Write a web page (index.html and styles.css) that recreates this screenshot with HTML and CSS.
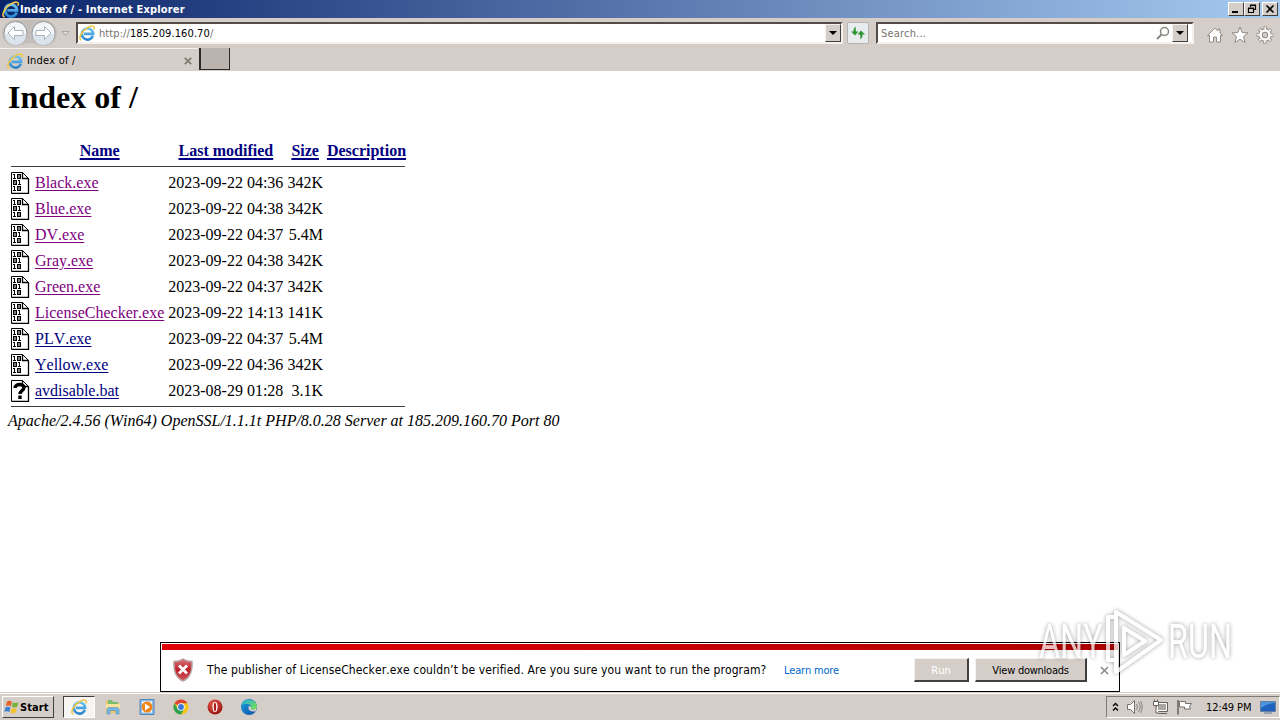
FILE: index.html
```html
<!DOCTYPE html>
<html lang="en">
<head>
    <meta charset="UTF-8">
    <meta name="viewport" content="width=device-width, initial-scale=1.0">
    <title>Index of / - Internet Explorer</title>
    <link rel="stylesheet" href="styles.css">
</head>
<body>
    <!-- Shared icons -->
    <svg class="defs" width="0" height="0">
        <defs>
            <linearGradient id="redShield" x1="0" y1="0" x2="0" y2="1">
                <stop offset="0" stop-color="#d9777b"/>
                <stop offset="0.5" stop-color="#bd1f2a"/>
                <stop offset="1" stop-color="#d0565c"/>
            </linearGradient>
            <linearGradient id="edgeBlue" x1="0" y1="0" x2="1" y2="1">
                <stop offset="0" stop-color="#1e9fe0"/>
                <stop offset="1" stop-color="#0b4ea3"/>
            </linearGradient>
            <linearGradient id="edgeGreen" x1="0" y1="0" x2="1" y2="0.6">
                <stop offset="0" stop-color="#22a6e6"/>
                <stop offset="1" stop-color="#6fe05a"/>
            </linearGradient>
            <radialGradient id="operaRed" cx="0.4" cy="0.3" r="0.8">
                <stop offset="0" stop-color="#e8604f"/>
                <stop offset="1" stop-color="#8f0808"/>
            </radialGradient>
            <linearGradient id="ieBlue" x1="0" y1="0" x2="0" y2="1">
                <stop offset="0" stop-color="#6cc3f0"/>
                <stop offset="1" stop-color="#2a86cf"/>
            </linearGradient>
        </defs>
        <symbol id="ie" viewBox="0 0 16 16">
            <path d="M13.800 10.800A5.600 5.600 0 1 1 14.100 8.900H5" fill="none" stroke="url(#ieBlue)" stroke-width="2.600"/>
            <path d="M2.500 15C-1.500 14.500 2.500 6 8 3 13 0 16.500.5 15 4.500" fill="none" stroke="#efc545" stroke-width="1.500"/>
        </symbol>
        <symbol id="binary" viewBox="0 0 20 22">
            <path d="M.5.5h11l6 6v15h-17z" fill="#fff" stroke="#000"/>
            <path d="M11.500.5v6h6M17.500 7v14.500H1" fill="none" stroke="#000" stroke-width="1.300"/>
            <!-- 10 / 01 / 10 -->
            <path d="M2 2h2v4h1v1H2V6h1V3H2zM2 14h2v4h1v1H2v-1h1v-3H2zM7 8h2v4h1v1H7v-1h1V9H7z"/>
            <path d="M6 2h4v5H6zM7.500 3v3h1V3zM2 8h4v5H2zM3.500 9v3h1V9zM6 14h4v5H6zM7.500 15v3h1v-3z" fill-rule="evenodd"/>
        </symbol>
        <symbol id="unknown" viewBox="0 0 20 22">
            <path d="M.5.5h11l6 6v15h-17z" fill="#fff" stroke="#000"/>
            <path d="M11.500.5v6h6M17.500 7v14.500H1" fill="none" stroke="#000" stroke-width="1.300"/>
            <path d="M4 8C4 3.500 13 3.500 13 7.500c0 3-4 3-4 6.500M9 15.500v3.500" fill="none" stroke="#000" stroke-width="3.400"/>
        </symbol>
    </svg>

    <div class="titlebar">
        <svg class="title-icon" width="17" height="17"><use href="#ie"/></svg>
        <span class="title-text">Index of / - Internet Explorer</span>
        <div class="window-buttons">
            <span class="win-btn"><svg width="14" height="12"><path d="M3 9h6" stroke="#000" stroke-width="2"/></svg></span>
            <span class="win-btn"><svg width="14" height="12"><path d="M5.500 4V2.500h5v4H9M5 2h6M3.500 5.500h5v4h-5zM3 5h6" fill="none" stroke="#000" stroke-width="1.200"/></svg></span>
            <span class="win-btn close"><svg width="14" height="12"><path d="M3.500 2.500l7 7M10.500 2.500l-7 7" stroke="#000" stroke-width="1.600"/></svg></span>
        </div>
    </div>

    <div class="navbar">
        <svg class="back-forward" width="72" height="30">
            <path d="M15 2h29a13 13 0 0 1 0 26c-7 0-8-3-14-3s-8 3-15 3A13 13 0 0 1 15 2z" fill="#c3beba"/>
            <circle cx="15.500" cy="15" r="11.500" fill="#f3f5f7" stroke="#929497"/>
            <circle cx="43.500" cy="15" r="11.500" fill="#f3f5f7" stroke="#929497"/>
            <path d="M4.500 16a11 11 0 0 0 22 0zM32.500 16a11 11 0 0 0 22 0z" fill="#dbe4ec"/>
            <path d="M8 15l6.500-6.500v4H23v5h-8.500v4zM51 15l-6.500-6.500v4H36v5h8.500v4z" fill="#fff" stroke="#a9b3bd"/>
            <path d="M62 13.500h7l-3.500 4z" fill="#dfdbd5" stroke="#aaa59f"/>
        </svg>
        <div class="field address">
            <svg width="16" height="16"><use href="#ie"/></svg>
            <span class="url">http://<b>185.209.160.70</b>/</span>
            <span class="drop"></span>
        </div>
        <div class="refresh">
            <svg width="20" height="20"><path d="M8 3.500C5.500 5 5.500 6.500 5.500 8.500H3l4 4 3.500-4H8C7.500 6.500 7.500 5 8 3.500zM12 16.500c2.500-1.500 2.500-3 2.500-5H17l-4-4-3.500 4H12c.5 2 .5 3.500 0 5z" fill="#2f9634"/></svg>
        </div>
        <div class="field search">
            <span class="placeholder">Search...</span>
            <svg width="14" height="14"><circle cx="8.500" cy="5.500" r="4" fill="#fff" stroke="#88837e" stroke-width="1.500"/><path d="M5.500 8.500L1 13" stroke="#88837e" stroke-width="2"/></svg>
            <span class="drop"></span>
        </div>
        <div class="tools">
            <svg width="18" height="18"><path d="M9 2L1.500 9.500H3.500v6.500h4v-5h3v5h4V9.500h2L14 7V3h-2v2z" fill="#fff" stroke="#918b86"/></svg>
            <svg width="18" height="18"><path d="M9 1l2.200 5.500 5.800.3-4.500 3.800 1.500 5.900L9 13.200l-5 3.300 1.500-5.900L1 6.800l5.800-.3z" fill="#fff" stroke="#918b86"/></svg>
            <svg width="18" height="18">
                <circle cx="9" cy="9" r="6.800" fill="none" stroke="#918b86" stroke-width="3.400" stroke-dasharray="3.200 2.140" stroke-dashoffset="1.600"/>
                <circle cx="9" cy="9" r="4.500" fill="none" stroke="#918b86" stroke-width="4.400"/>
                <circle cx="9" cy="9" r="6.600" fill="none" stroke="#fff" stroke-width="2.400" stroke-dasharray="1.700 3.484" stroke-dashoffset=".85"/>
                <circle cx="9" cy="9" r="4.500" fill="none" stroke="#fff" stroke-width="2.600"/>
            </svg>
        </div>
    </div>

    <div class="tabbar">
        <div class="tab">
            <svg width="16" height="16"><use href="#ie"/></svg>
            <span class="tab-title">Index of /</span>
            <svg width="8" height="8"><path d="M.8.8l6.400 6.400M7.200.8L.8 7.200" stroke="#817a75" stroke-width="1.700"/></svg>
        </div>
        <div class="new-tab"></div>
    </div>

    <div class="page">
        <h1>Index of /</h1>
        <table class="listing">
            <tr><th><div class="blank"></div></th><th class="name"><a href="#">Name</a></th><th><a href="#">Last modified</a></th><th><a href="#">Size</a></th><th><a href="#">Description</a></th></tr>
            <tr><td colspan="5"><hr></td></tr>
            <tr><td><svg width="20" height="22"><use href="#binary"/></svg></td><td><a class="visited" href="#">Black.exe</a></td><td>2023-09-22 04:36</td><td class="size">342K</td><td></td></tr>
            <tr><td><svg width="20" height="22"><use href="#binary"/></svg></td><td><a class="visited" href="#">Blue.exe</a></td><td>2023-09-22 04:38</td><td class="size">342K</td><td></td></tr>
            <tr><td><svg width="20" height="22"><use href="#binary"/></svg></td><td><a class="visited" href="#">DV.exe</a></td><td>2023-09-22 04:37</td><td class="size">5.4M</td><td></td></tr>
            <tr><td><svg width="20" height="22"><use href="#binary"/></svg></td><td><a class="visited" href="#">Gray.exe</a></td><td>2023-09-22 04:38</td><td class="size">342K</td><td></td></tr>
            <tr><td><svg width="20" height="22"><use href="#binary"/></svg></td><td><a class="visited" href="#">Green.exe</a></td><td>2023-09-22 04:37</td><td class="size">342K</td><td></td></tr>
            <tr><td><svg width="20" height="22"><use href="#binary"/></svg></td><td><a class="visited" href="#">LicenseChecker.exe</a></td><td>2023-09-22 14:13</td><td class="size">141K</td><td></td></tr>
            <tr><td><svg width="20" height="22"><use href="#binary"/></svg></td><td><a href="#">PLV.exe</a></td><td>2023-09-22 04:37</td><td class="size">5.4M</td><td></td></tr>
            <tr><td><svg width="20" height="22"><use href="#binary"/></svg></td><td><a href="#">Yellow.exe</a></td><td>2023-09-22 04:36</td><td class="size">342K</td><td></td></tr>
            <tr><td><svg width="20" height="22"><use href="#unknown"/></svg></td><td><a href="#">avdisable.bat</a></td><td>2023-08-29 01:28</td><td class="size">3.1K</td><td></td></tr>
            <tr><td colspan="5"><hr></td></tr>
        </table>
        <address>Apache/2.4.56 (Win64) OpenSSL/1.1.1t PHP/8.0.28 Server at 185.209.160.70 Port 80</address>
    </div>

    <!-- Download warning -->
    <div class="notice">
        <div class="notice-stripe"></div>
        <div class="notice-body">
            <svg class="shield" width="22" height="24">
                <path d="M11 1c3 2 6 2.500 9 2.500C20.500 13 18 20 11 23 4 20 1.500 13 2 3.500 5 3.500 8 3 11 1z" fill="url(#redShield)" stroke="#b9a3a3" stroke-width="1.500"/>
                <path d="M7 7.500l8 8M15 7.500l-8 8" stroke="#fff" stroke-width="2.800"/>
            </svg>
            <span class="notice-text">The publisher of LicenseChecker.exe couldn’t be verified. Are you sure you want to run the program?</span>
            <a class="learn" href="#">Learn more</a>
            <span class="button run">Run</span>
            <span class="button view">View downloads</span>
            <svg class="dismiss" width="9" height="9"><path d="M1 1l7 7M8 1L1 8" stroke="#918b88" stroke-width="1.700"/></svg>
        </div>
    </div>

    <svg class="watermark" width="210" height="76" viewBox="0 0 210 76">
        <text transform="translate(9 54) scale(0.66 1)">ANY</text>
        <text transform="translate(138 54) scale(0.66 1)">RUN</text>
        <path d="M84 13h-6v43h6M86 8l45 28-45 32zM94 24v27l21-14z"/>
    </svg>

    <div class="taskbar">
        <div class="start">
            <svg width="16" height="16">
                <path d="M3 2.500q2.500-1.500 5 .2L6.800 7.200q-2.500-1.500-5 0z" fill="#e8642c"/>
                <path d="M9 3.200q2.500 1.500 5.500 0L13.200 7.700q-2.700 1.500-5.400 0z" fill="#78b43c"/>
                <path d="M1.500 8.400q2.500-1.500 5 0L5.200 13q-2.500-1.500-5 0z" fill="#3c82d4"/>
                <path d="M7.500 9q2.700 1.500 5.400 0l-1.300 4.600q-2.700 1.500-5.400 0z" fill="#f4c030"/>
            </svg>
            <span>Start</span>
        </div>
        <div class="quick">
            <div class="task active"><svg width="16" height="16"><use href="#ie"/></svg></div>
            <div class="task">
                <svg width="18" height="18"><path d="M2 3h5l1 2h7v10H2z" fill="#e9c766"/><path d="M4 2h4l1 2h5v3H4z" fill="#79bd70"/><path d="M2 6h14v5H2z" fill="#f7e39c"/><path d="M3 16v-4.500q0-2 2-2h8q2 0 2 2V16h-3v-3.500H6V16z" fill="#77b7e2" stroke="#5594bf" stroke-width=".6"/></svg>
            </div>
            <div class="task">
                <svg width="18" height="18"><path d="M2 1.500h14v15H2z" fill="#8fbbe2" stroke="#4d86bd"/><path d="M4 3.500h10v11H4z" fill="#fff"/><circle cx="9" cy="9" r="5.500" fill="#ee861b"/><path d="M7 5.500v7l5-3.500z" fill="#fff"/></svg>
            </div>
            <div class="task">
                <svg width="18" height="18"><circle cx="9" cy="9" r="7.500" fill="#f5c518"/><path d="M9 9L2.500 5.250A7.500 7.500 0 0 1 15.500 5.250H9z" fill="#dd4437"/><path d="M2.500 5.250A7.500 7.500 0 0 0 9 16.500l3.200-5.500L9 9 5.700 10.800z" fill="#2fa150"/><circle cx="9" cy="9" r="3.800" fill="#fff"/><circle cx="9" cy="9" r="2.900" fill="#3b78dc"/></svg>
            </div>
            <div class="task">
                <svg width="18" height="18"><circle cx="9" cy="9" r="7.500" fill="url(#operaRed)"/><ellipse cx="9" cy="9" rx="2.500" ry="5" fill="#fff"/><ellipse cx="9" cy="9" rx="1.200" ry="4.200" fill="#b01b17"/></svg>
            </div>
            <div class="task">
                <svg width="18" height="18"><circle cx="9" cy="9" r="8" fill="url(#edgeBlue)"/><path d="M1.500 7C3-.5 16 .3 17 8.500c0 4-6 4-6 2 1-2-1-4.500-4-4.500-2 0-4.500.5-5.500 1z" fill="url(#edgeGreen)"/><path d="M9 8c-2 3 1 6.500 6.500 5.200l1.500-4c-1 2.500-6 3-6 1 .5-1 0-2-2-2.200z" fill="#d5cec8"/></svg>
            </div>
        </div>
        <div class="tray">
            <svg width="7" height="10"><path d="M1 4l2.500-2.500L6 4M1 8.500L3.500 6 6 8.500" fill="none" stroke="#000" stroke-width="1.400"/></svg>
            <svg width="17" height="16"><path d="M1.500 5.500h3l4-4v13l-4-4h-3z" fill="#fff" stroke="#77716d"/><path d="M10.500 5q2 3 0 6M12.500 3q3.500 5 0 10M14.500 2q3.500 6 0 12" fill="none" stroke="#89837e"/></svg>
            <svg width="17" height="16"><path d="M4.500 3.500h11v9h-11z" fill="#a9a5a1" stroke="#66615d"/><path d="M5.500 4.500h9v7h-9z" fill="none" stroke="#fff"/><path d="M7 14.500h8" stroke="#66615d"/><path d="M1.500 2.500h5v4h-5zM2.500.5v2M5.500.5v2M4 7v7h3" fill="#fff" stroke="#66615d"/></svg>
            <svg width="17" height="16"><path d="M2 1v14.500" stroke="#66615d" stroke-width="1.500"/><path d="M3.500 2.500h6v2h6l-2 3 1 2.500h-6V8h-5z" fill="#fff" stroke="#77716d"/></svg>
            <span class="clock">12:49 PM</span>
            <svg width="16" height="14"><path d="M.5 1.500h15v10H.5z" fill="#1f62bd" stroke="#66809f"/><path d="M1 8Q8 3 15 3V2H1z" fill="#4b94df"/><path d="M4 13h8" stroke="#5e7896"/></svg>
        </div>
    </div>
</body>
</html>
```

FILE: styles.css
```css
/* Basic styling */
* {
    box-sizing: border-box;
}

body {
    display: flex;
    flex-direction: column;
    height: 720px;
    margin: 0;
    overflow: hidden;
    background-color: #fff;
    color: #000;
    font-family: "DejaVu Sans Condensed", "DejaVu Sans", sans-serif;
    font-size: 11px;
    font-kerning: none;
}

svg {
    display: block;
    flex: none;
}

.defs {
    position: absolute;
}

/* Title bar */
.titlebar {
    display: flex;
    align-items: center;
    flex: none;
    height: 18px;
    padding: 0 2px;
    background: linear-gradient(to right, #0a246a, #a6caf0);
}

.title-text {
    flex: 1;
    margin-left: 1px;
    color: #fff;
    font-weight: bold;
    letter-spacing: 0.18px;
}

.window-buttons {
    display: flex;
}

.win-btn {
    width: 16px;
    height: 14px;
    background-color: #d5cec8;
    border: 1px solid;
    border-color: #fff #404040 #404040 #fff;
}

.win-btn.close {
    margin-left: 2px;
}

/* Address row */
.navbar {
    display: flex;
    align-items: center;
    flex: none;
    height: 30px;
    background-color: #d5cec8;
}

.back-forward {
    margin-right: 4px;
}

.field {
    display: flex;
    align-items: center;
    height: 22px;
    background-color: #fff;
    border: 2px solid;
    border-color: #534c48 #f5f1ed #f5f1ed #534c48;
}

.address {
    width: 767px;
    padding-left: 1px;
}

.url {
    flex: 1;
    margin-left: 4px;
    padding-top: 1px;
    color: #77736f;
    letter-spacing: 0.09px;
}

.url b {
    color: #000;
    font-weight: normal;
}

.drop {
    display: flex;
    align-items: center;
    justify-content: center;
    width: 16px;
    height: 18px;
    background-color: #d5cec8;
    border: 1px solid;
    border-color: #f5f1ed #404040 #404040 #f5f1ed;
}

.drop::before {
    content: "";
    border: 4px solid transparent;
    border-top-color: #000;
    border-bottom: 0;
}

.refresh {
    width: 22px;
    height: 22px;
    margin: 0 7px 0 4px;
    background-color: #e9ecee;
    border: 1px solid #b6b4b2;
    border-radius: 2px;
}

.search {
    width: 318px;
    padding: 0 4px 0 3px;
}

.placeholder {
    flex: 1;
    padding-top: 1px;
    color: #77736f;
    letter-spacing: 0.15px;
}

.search svg {
    margin-right: 2px;
}

.tools {
    display: flex;
    gap: 7px;
    margin: 4px 0 0 12px;
}

/* Tabs */
.tabbar {
    display: flex;
    flex: none;
    height: 23px;
    background-color: #d5cec8;
}

.tab {
    display: flex;
    align-items: center;
    width: 198px;
    padding: 1px 6px 0 7px;
    border-top: 1px solid #f5f1ed;
}

.tab-title {
    flex: 1;
    margin-left: 4px;
    letter-spacing: 0.2px;
}

.new-tab {
    width: 31px;
    height: 22px;
    margin-left: 1px;
    background-color: #bbb3ae;
    border: 1px solid #2b2827;
    border-width: 0 1px 1px 2px;
}

/* Directory listing */
.page {
    flex: 1;
    padding: 8px;
    font-family: "Liberation Serif", serif;
    font-size: 16px;
}

h1 {
    margin: 0 0 21px;
    font-size: 32px;
    line-height: 37px;
}

.listing {
    border-spacing: 2px;
    line-height: 18px;
}

.listing th,
.listing td {
    padding: 1px;
    white-space: nowrap;
}

.listing .name {
    width: 131px;
}

.listing a {
    color: #000080;
    text-underline-offset: 2px;
}

.listing th a {
    text-decoration-thickness: 2px;
}

.listing a.visited {
    color: #800080;
}

.listing .size {
    text-align: right;
}

.blank {
    width: 20px;
    height: 22px;
}

hr {
    width: 394px;
    height: 2px;
    margin: 0;
    border: 0;
    border-top: 1px solid #3c3c3c;
}

address {
    padding-top: 1px;
    line-height: 18px;
}

/* Download warning */
.notice {
    position: absolute;
    left: 160px;
    top: 642px;
    width: 960px;
    height: 50px;
    padding: 1px;
    background-color: #fff;
    border: 1px solid #000;
}

.notice-stripe {
    height: 6px;
    background: linear-gradient(to right, #e10008, #b00000);
}

.notice-body {
    display: flex;
    align-items: center;
    height: 40px;
    padding: 0 9px 0 10px;
}

.notice-text {
    width: 577px;
    margin-left: 13px;
    font-size: 12px;
    letter-spacing: 0.11px;
    white-space: nowrap;
}

.learn {
    width: 130px;
    color: #0066cc;
    letter-spacing: -0.2px;
    text-decoration: none;
}

.button {
    height: 24px;
    margin-right: 6px;
    background-color: #d5cec8;
    border: 1px solid;
    border-color: #f5f1ed #404040 #404040 #f5f1ed;
    border-right-width: 2px;
    border-bottom-width: 2px;
    line-height: 24px;
    text-align: center;
}

.run {
    width: 55px;
    color: #fff;
}

.view {
    width: 112px;
    letter-spacing: -0.25px;
}

.dismiss {
    margin-left: auto;
}

.watermark {
    position: absolute;
    left: 1030px;
    top: 604px;
    overflow: visible;
    fill: #fff;
    font-family: Roboto, sans-serif;
    font-size: 49px;
    opacity: 0.75;
    filter: drop-shadow(0 0 2px rgba(0, 0, 0, 0.5));
}

.watermark path {
    fill: none;
    stroke: #fff;
    stroke-width: 4;
    stroke-linejoin: round;
}

/* Taskbar */
.taskbar {
    display: flex;
    align-items: center;
    flex: none;
    height: 28px;
    padding: 1px 0 0 2px;
    background-color: #d5cec8;
    border-top: 1px solid #d5cec8;
    box-shadow: inset 0 1px #fff;
}

.start {
    display: flex;
    align-items: center;
    width: 52px;
    height: 22px;
    padding-left: 1px;
    border: 1px solid;
    border-color: #fff #404040 #404040 #fff;
    font-weight: bold;
    letter-spacing: 0.1px;
}

.quick {
    display: flex;
    flex: 1;
    gap: 2px;
    margin-left: 9px;
}

.task {
    display: flex;
    align-items: center;
    justify-content: center;
    width: 32px;
    height: 22px;
}

.task.active {
    background-color: #f7f5f3;
    border: 1px solid;
    border-color: #404040 #fff #fff #404040;
}

.tray {
    display: flex;
    align-items: center;
    width: 174px;
    height: 22px;
    padding-left: 5px;
    gap: 7px;
    border: 1px solid;
    border-color: #817a75 #fff #fff #817a75;
}

.tray svg:nth-child(3),
.tray svg:nth-child(4) {
    position: relative;
    left: 2px;
}

.clock {
    margin: 0 2px 0 8px;
    letter-spacing: -0.1px;
    white-space: nowrap;
}
```
